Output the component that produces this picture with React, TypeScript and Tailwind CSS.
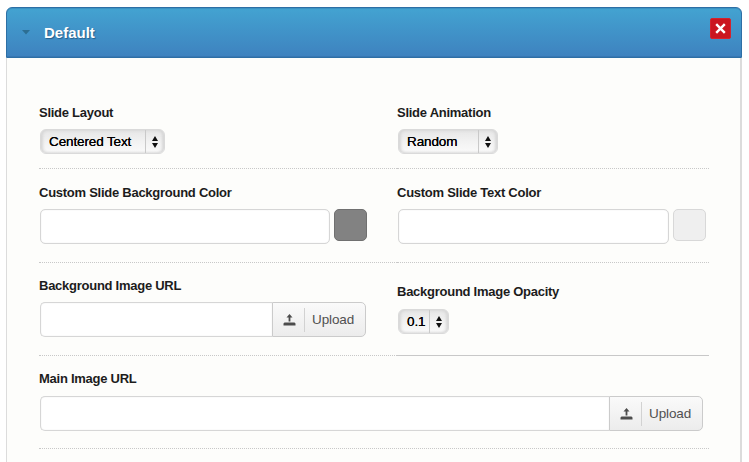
import React from "react";

function Label({ children }: { children: React.ReactNode }) {
  return (
    <div className="h-4 pt-px text-[13px] leading-4 font-bold tracking-[-0.26px] whitespace-nowrap text-[#1c1c1c]">
      {children}
    </div>
  );
}

function Select({ value, className }: { value: string; className: string }) {
  return (
    <button
      className={`flex h-[25px] items-stretch rounded-[6px] border border-[#dadada] bg-linear-to-b from-[#e6e6e6] via-[#f2f2f2] to-[#fafafa] text-left text-[13.5px] tracking-[-0.12px] text-black shadow-[inset_2px_0_3px_#d6d6d6,inset_-2px_0_3px_#d6d6d6] ${className}`}
    >
      <span className="flex-1 pl-2 leading-6 whitespace-nowrap [text-shadow:0_0_0.5px_#000]">{value}</span>
      <span className="flex w-[19px] items-center justify-center border-l border-[#c9c9c9]">
        <svg width="6" height="12" viewBox="0 0 6 12">
          <path d="M3 0 6 5H0ZM3 12 0 7H6Z" fill="#111" />
        </svg>
      </span>
    </button>
  );
}

function Field({ className }: { className: string }) {
  return (
    <input
      className={`h-[35px] border border-[#d6d6d6] bg-white shadow-[inset_0_0_1px_#d6d6d6] outline-none ${className}`}
    />
  );
}

function UploadField({ className }: { className: string }) {
  return (
    <div className={`ml-px flex h-[35px] ${className}`}>
      <Field className="min-w-0 flex-1 rounded-l-[5px] border-r-0" />
      <button className="flex w-[94px] items-center rounded-r-[5px] border border-[#cbcbcb] bg-linear-to-b from-[#fafafa] to-[#ececec] text-[#505050]">
        <svg className="ml-2.5" width="13" height="12" viewBox="0 0 13 12">
          <path d="M6.5 0 9.5 3.5H7.4V7.5H5.6V3.5H3.5ZM1.5 8.5H11.5L12.5 9.5V11.5H.5V9.5Z" fill="#4c4c4c" />
        </svg>
        <span className="ml-2 h-6 w-px bg-[#d2d2d2]" />
        <span className="ml-[7px] pt-0.5 text-[13.5px] tracking-[-0.1px]">Upload</span>
      </button>
    </div>
  );
}

const cell = "border-b border-dotted border-[#c8c8c8]";

export default function App() {
  return (
    <div className="h-[462px] w-[749px] overflow-hidden bg-white pt-[7px] pl-1.5 font-['Liberation_Sans',Arial,sans-serif]">
      <div className="w-[736px]">
        <header className="flex h-[51px] items-center rounded-t-[6px] border border-[#2d6fa5] bg-linear-to-b from-[#43a3d1] to-[#3e82bf] shadow-[inset_0_1px_0_#3a93c4,inset_0_-1px_0_#3877b3]">
          <svg className="ml-[15px]" width="8" height="5" viewBox="0 0 8 5">
            <path d="M0 0H8L4 4.5Z" fill="#2c6e93" />
          </svg>
          <h1 className="ml-[14px] pt-px text-[15px] leading-5 font-bold text-white [text-shadow:1px_1px_1px_#245f8d]">
            Default
          </h1>
          <button className="mr-[10px] mb-2 ml-auto flex size-[21px] items-center justify-center rounded-[2px] border border-[#d3232d] bg-[#cb151f]">
            <svg width="11" height="11" viewBox="0 0 11 11">
              <path d="m1.2 1.2 8.6 8.6m0-8.6L1.2 9.8" stroke="white" strokeWidth="2.4" />
            </svg>
          </button>
        </header>
        <main className="h-[404px] border-r-2 border-l border-[#dcdcdc] bg-[#fdfdfb] pl-8">
          <div className="grid w-[670px] grid-cols-[358px_312px] grid-rows-[111px_94px_93px_93px]">
            <div className={`${cell} pt-[46px]`}>
              <Label>Slide Layout</Label>
              <Select value="Centered Text" className="mt-[9px] ml-px w-[125px]" />
            </div>
            <div className={`${cell} pt-[46px]`}>
              <Label>Slide Animation</Label>
              <Select value="Random" className="mt-[9px] ml-px w-[100px]" />
            </div>
            <div className={`${cell} pt-[15px]`}>
              <Label>Custom Slide Background Color</Label>
              <div className="mt-[9px] ml-px flex gap-1">
                <Field className="w-[290px] rounded-[5px]" />
                <div className="h-8 w-[33px] rounded-[5px] border border-[#707070] bg-[#828282]" />
              </div>
            </div>
            <div className={`${cell} pt-[15px]`}>
              <Label>Custom Slide Text Color</Label>
              <div className="mt-[9px] ml-px flex gap-1">
                <Field className="w-[271px] rounded-[5px]" />
                <div className="h-8 w-[33px] rounded-[5px] border border-[#d8d8d8] bg-[#efefef]" />
              </div>
            </div>
            <div className={`${cell} pt-[14px]`}>
              <Label>Background Image URL</Label>
              <UploadField className="mt-[9px] w-[326px]" />
            </div>
            <div className="border-b border-[#c8c8c8] pt-5">
              <Label>Background Image Opacity</Label>
              <Select value="0.1" className="mt-[10px] ml-px w-[51px]" />
            </div>
            <div className={`${cell} col-span-2 pt-[14px]`}>
              <Label>Main Image URL</Label>
              <UploadField className="mt-[10px] w-[663px]" />
            </div>
          </div>
        </main>
      </div>
    </div>
  );
}
